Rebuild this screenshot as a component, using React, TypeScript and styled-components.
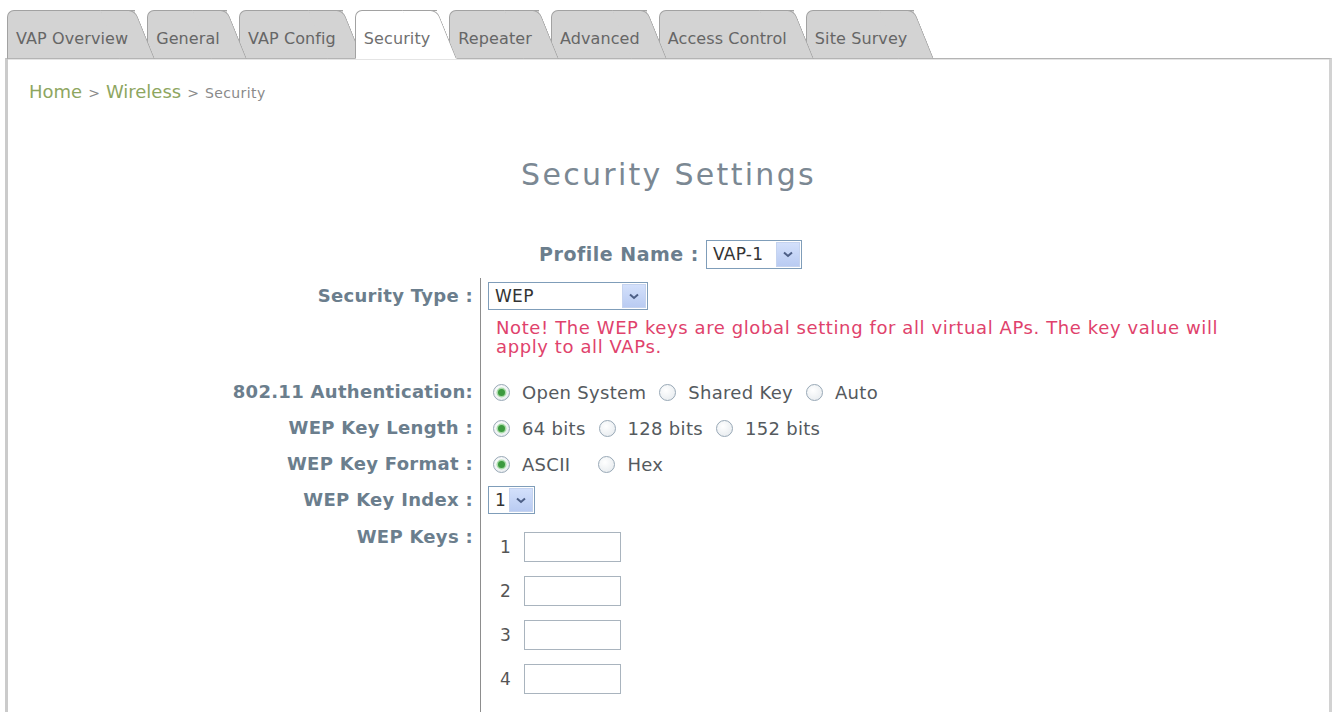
import React from "react";
import styled, { createGlobalStyle } from "styled-components";

const Global = createGlobalStyle`
  html, body { margin: 0; padding: 0; background: #fff; }
  body { font-family: "DejaVu Sans", Verdana, sans-serif; }
`;

const Page = styled.div`
  width: 1334px;
  box-sizing: border-box;
  padding: 10px 2px 0 5px;
`;

const TabStrip = styled.div`
  display: flex;
  align-items: flex-end;
  padding-left: 2px;
  margin-bottom: -1px;
  position: relative;
  z-index: 2;
`;

const Tab = styled.div<{ $active?: boolean; $z: number }>`
  position: relative;
  z-index: ${(p) => (p.$active ? 50 : p.$z)};
  height: 49px;
  box-sizing: border-box;
  margin-right: 12px;
  padding: 8px 7px 0 8px;
  display: flex;
  align-items: center;
  font-size: 16px;
  letter-spacing: 0.1px;
  white-space: nowrap;
  color: ${(p) => (p.$active ? "#707070" : "#666")};
  background: ${(p) => (p.$active ? "#fff" : "#d3d3d3")};
  border: 1px solid #a2a2a2;
  border-right: none;
  border-bottom-color: ${(p) => (p.$active ? "#fff" : "#b4b4b4")};
  border-top-left-radius: 7px;

  &::after {
    content: "";
    position: absolute;
    top: -1px;
    bottom: -1px;
    right: -20px;
    width: 34px;
    background: inherit;
    border-top: 1px solid #a2a2a2;
    border-right: 1px solid #a2a2a2;
    border-bottom: 1px solid ${(p) => (p.$active ? "#fff" : "#b4b4b4")};
    border-top-right-radius: 7px;
    transform: skewX(22deg);
    transform-origin: bottom left;
    z-index: -1;
  }
`;

const Panel = styled.div`
  position: relative;
  z-index: 1;
  border-top: 1px solid #b4b4b4;
  border-left: 3px solid #cbcbcb;
  border-right: 3px solid #d2d2d2;
  box-shadow: inset 0 1px 0 #e4e4e4;
  min-height: 660px;
`;

const Crumbs = styled.div`
  padding: 22px 0 0 21px;
  line-height: 22px;
  font-size: 18px;
  color: #8ea65f;
`;

const CrumbSep = styled.span`
  font-size: 14px;
  color: #8a8a8a;
  margin: 0 6px;
`;

const CrumbHere = styled.span`
  font-size: 14px;
  letter-spacing: 0.4px;
  color: #8a8a8a;
`;

const Title = styled.h1`
  margin: 53px 0 0;
  text-align: center;
  font-weight: normal;
  font-size: 30px;
  line-height: 36px;
  letter-spacing: 2.3px;
  color: #7b8893;
`;

const ProfileRow = styled.div`
  margin-top: 47px;
  height: 28px;
  display: flex;
  justify-content: center;
  align-items: center;
  padding-left: 4px;
`;

const Label = styled.div<{ $top?: boolean; $size?: number }>`
  font-weight: bold;
  font-size: ${(p) => p.$size ?? 18}px;
  letter-spacing: ${(p) => (p.$size ? 0.5 : 0.3)}px;
  line-height: 22px;
  color: #6b7e8d;
  text-align: right;
  white-space: nowrap;
  padding-right: 7px;
  display: flex;
  justify-content: flex-end;
  align-items: ${(p) => (p.$top ? "flex-start" : "center")};
  padding-top: ${(p) => (p.$top ? "8px" : "0")};
`;

const Form = styled.div`
  margin-top: 10px;
  display: grid;
  grid-template-columns: 472px 1fr;
`;

const Cell = styled.div<{ $h?: number; $note?: boolean }>`
  border-left: 1px solid #8d8d8d;
  padding-left: 7px;
  min-height: ${(p) => p.$h ?? 36}px;
  display: flex;
  align-items: ${(p) => (p.$note ? "flex-start" : "center")};
  font-size: 18px;
  letter-spacing: 0.3px;
  color: #555a5e;
`;

const Note = styled.div`
  padding: 4px 0 0 8px;
  line-height: 19px;
  font-size: 18px;
  letter-spacing: 0.6px;
  color: #e0426c;
  max-width: 745px;
`;

const SelectBox = styled.div<{ $w: number; $h: number }>`
  width: ${(p) => p.$w}px;
  height: ${(p) => p.$h}px;
  box-sizing: border-box;
  border: 1px solid #7f9db9;
  background: #fff;
  display: flex;
  align-items: stretch;
  font-size: 17px;
  letter-spacing: 0.3px;
  color: #333;
`;

const SelectText = styled.span`
  flex: 1;
  display: flex;
  align-items: center;
  padding-left: 6px;
`;

const SelectArrow = styled.span`
  width: 22px;
  margin: 1px;
  background: linear-gradient(#d3e0fb, #b9cbf2);
  border: 1px solid #c5d3ef;
  display: flex;
  align-items: center;
  justify-content: center;
`;

const Chevron = () => (
  <svg width="10" height="7" viewBox="0 0 10 7">
    <path d="M1 1.5 L5 5 L9 1.5" fill="none" stroke="#4d5f86" strokeWidth="2" />
  </svg>
);

const Select = ({ value, w, h }: { value: string; w: number; h: number }) => (
  <SelectBox $w={w} $h={h}>
    <SelectText>{value}</SelectText>
    <SelectArrow>
      <Chevron />
    </SelectArrow>
  </SelectBox>
);

const RadioGroup = styled.div`
  display: flex;
  align-items: center;
  padding-left: 5px;
`;

const RadioItem = styled.label<{ $gapAfter?: number }>`
  display: flex;
  align-items: center;
  gap: 12px;
  margin-right: ${(p) => p.$gapAfter ?? 13}px;
`;

const RadioDot = styled.span<{ $on?: boolean }>`
  width: 17px;
  height: 17px;
  box-sizing: border-box;
  border-radius: 50%;
  border: 1px solid #98a8b6;
  background: radial-gradient(circle at 40% 35%, #ffffff, #e3e8ec);
  display: flex;
  align-items: center;
  justify-content: center;
  &::after {
    content: "";
    display: ${(p) => (p.$on ? "block" : "none")};
    width: 7px;
    height: 7px;
    border-radius: 50%;
    background: #3c9a3f;
    box-shadow: 0 0 0 1.5px #a9dba9;
  }
`;

const Radio = ({ on, label, gapAfter }: { on?: boolean; label: string; gapAfter?: number }) => (
  <RadioItem $gapAfter={gapAfter}>
    <RadioDot $on={on} />
    {label}
  </RadioItem>
);

const KeyList = styled.div`
  padding: 7px 0 20px 12px;
`;

const KeyLine = styled.div`
  height: 44px;
  display: flex;
  align-items: center;
  gap: 13px;
  font-size: 17px;
  color: #555;
`;

const KeyInput = styled.span`
  width: 97px;
  height: 30px;
  box-sizing: border-box;
  border: 1px solid #a9b4be;
  background: #fff;
`;

const tabs = [
  "VAP Overview",
  "General",
  "VAP Config",
  "Security",
  "Repeater",
  "Advanced",
  "Access Control",
  "Site Survey",
];

export default function App() {
  return (
    <Page>
      <Global />
      <TabStrip>
        {tabs.map((t, i) => (
          <Tab key={t} $active={t === "Security"} $z={20 - i}>
            {t}
          </Tab>
        ))}
      </TabStrip>
      <Panel>
        <Crumbs>
          Home<CrumbSep>&gt;</CrumbSep>Wireless<CrumbSep>&gt;</CrumbSep>
          <CrumbHere>Security</CrumbHere>
        </Crumbs>
        <Title>Security Settings</Title>
        <ProfileRow>
          <Label $size={19}>Profile Name :</Label>
          <Select value="VAP-1" w={96} h={29} />
        </ProfileRow>
        <Form>
          <Label>Security Type :</Label>
          <Cell>
            <Select value="WEP" w={160} h={28} />
          </Cell>

          <Label />
          <Cell $h={60} $note>
            <Note>
              Note! The WEP keys are global setting for all virtual APs. The key value will
              apply to all VAPs.
            </Note>
          </Cell>

          <Label>802.11 Authentication:</Label>
          <Cell>
            <RadioGroup>
              <Radio on label="Open System" />
              <Radio label="Shared Key" />
              <Radio label="Auto" />
            </RadioGroup>
          </Cell>

          <Label>WEP Key Length :</Label>
          <Cell>
            <RadioGroup>
              <Radio on label="64 bits" />
              <Radio label="128 bits" />
              <Radio label="152 bits" />
            </RadioGroup>
          </Cell>

          <Label>WEP Key Format :</Label>
          <Cell>
            <RadioGroup>
              <Radio on label="ASCII" gapAfter={28} />
              <Radio label="Hex" />
            </RadioGroup>
          </Cell>

          <Label>WEP Key Index :</Label>
          <Cell>
            <Select value="1" w={47} h={28} />
          </Cell>

          <Label $top>WEP Keys :</Label>
          <Cell $note>
            <KeyList>
              {[1, 2, 3, 4].map((n) => (
                <KeyLine key={n}>
                  {n}
                  <KeyInput />
                </KeyLine>
              ))}
            </KeyList>
          </Cell>
        </Form>
      </Panel>
    </Page>
  );
}
